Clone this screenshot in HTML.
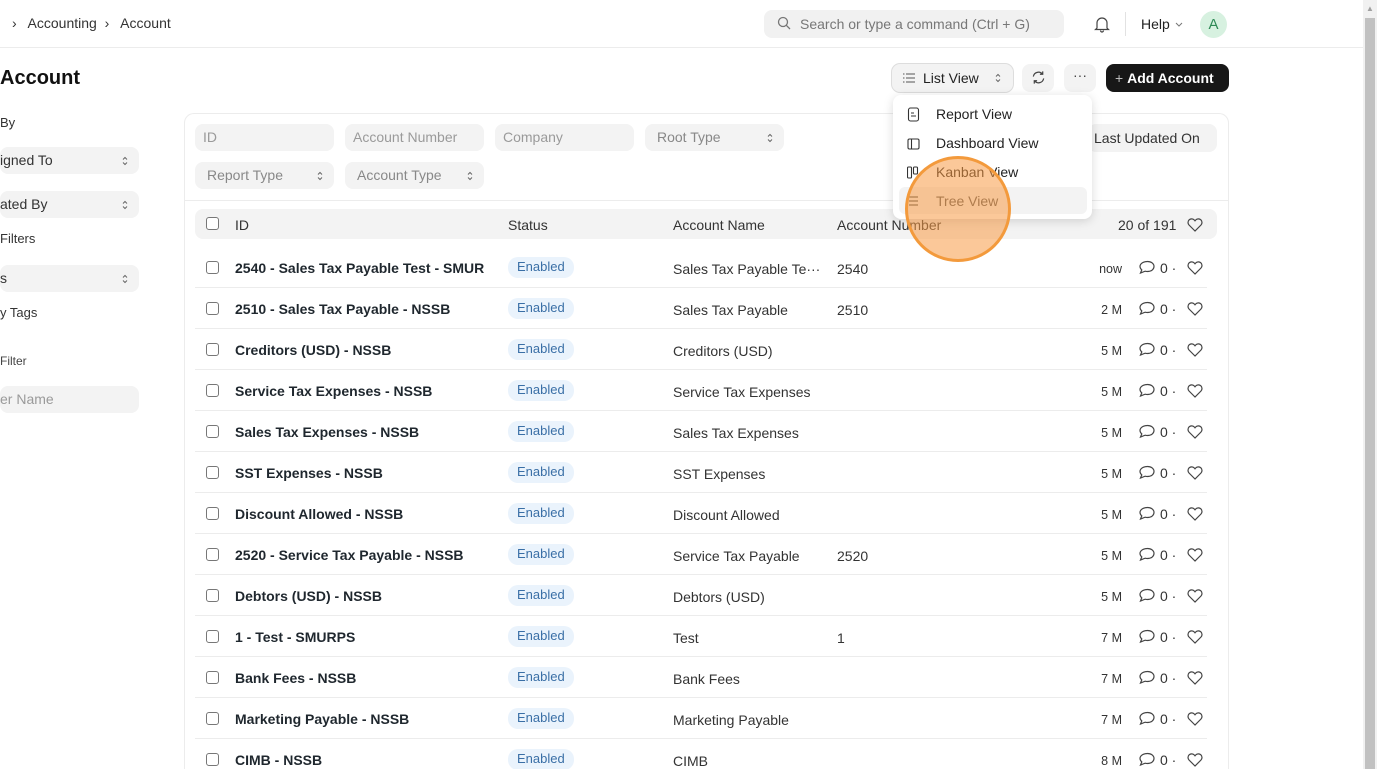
<!DOCTYPE html>
<html style="width:1377px;height:769px;overflow:hidden"><head><meta charset="utf-8">
<style>
*{box-sizing:border-box;margin:0;padding:0}
body{width:1377px;height:769px;overflow:hidden;background:#fff;font-family:"Liberation Sans",sans-serif;color:#1f272e;position:relative;font-size:14px}
.a{position:absolute;white-space:nowrap}
.inp{position:absolute;background:#f3f3f3;border-radius:8px;height:27px;color:#9a9a9a;font-size:14px;line-height:27px;padding-left:8px}
.sel{position:absolute;background:#f3f3f3;border-radius:8px;height:27px;color:#333;font-size:14px;line-height:27px;padding-left:0}
.chev{position:absolute;right:11px;top:9px;width:6px;height:10px}
.cb{position:absolute;width:13px;height:13px;border:1px solid #777;border-radius:3px;background:#fff}
.row{position:absolute;left:195px;width:1012px;height:41px;border-bottom:1px solid #ececec}
.row .cb{left:11px;top:14px}
.row .id{position:absolute;left:40px;top:13px;font-weight:bold;font-size:14px;color:#1f272e}
.row .st{position:absolute;left:313px;top:10px;background:#eaf3fc;color:#3a6fa6;font-size:13px;border-radius:10px;padding:2px 9px;height:21px}
.row .nm{position:absolute;left:478px;top:14px;color:#333}
.row .num{position:absolute;left:642px;top:14px;color:#333}
.row .tm{position:absolute;right:85px;top:15px;font-size:12.5px;color:#333}
.row .cm{position:absolute;left:965px;top:13px;color:#333;font-size:14px}
svg{display:block}
.menu div{position:absolute;left:43px;font-size:14px;color:#222}
</style></head><body>
<svg width="0" height="0" style="position:absolute"><defs>
<symbol id="ch" viewBox="0 0 6 10"><path d="M1 3.5L3 1.5L5 3.5M1 6.5L3 8.5L5 6.5" fill="none" stroke="#666" stroke-width="1"/></symbol>
</defs></svg>
<div class="a" style="left:12px;top:15px;font-size:14px;color:#333">›&nbsp;&nbsp; Accounting &nbsp;›&nbsp;&nbsp; Account</div>
<div class="a" style="left:764px;top:10px;width:300px;height:28px;background:#f1f1f1;border-radius:8px"></div>
<svg class="a" style="left:777px;top:16px" width="14" height="14" viewBox="0 0 14 14"><circle cx="6" cy="6" r="4.5" fill="none" stroke="#777" stroke-width="1.3"/><path d="M9.3 9.3L13 13" stroke="#777" stroke-width="1.3"/></svg>
<div class="a" style="left:800px;top:16px;color:#777;font-size:14px">Search or type a command (Ctrl + G)</div>
<svg class="a" style="left:1094px;top:15px" width="16" height="18" viewBox="0 0 16 18"><path d="M3 13V8a5 5 0 0110 0v5l1.5 1.5h-13z M6.5 15.5a1.5 1.5 0 003 0" fill="none" stroke="#444" stroke-width="1.2"/></svg>
<div class="a" style="left:1125px;top:12px;width:1px;height:24px;background:#e2e2e2"></div>
<div class="a" style="left:1141px;top:16px;color:#222;font-size:14px">Help</div>
<svg class="a" style="left:1175px;top:22px" width="8" height="5" viewBox="0 0 8 5"><path d="M1 1l3 3 3-3" fill="none" stroke="#777"/></svg>
<div class="a" style="left:1200px;top:11px;width:27px;height:27px;border-radius:50%;background:#d7f1e0;color:#2e8a55;text-align:center;line-height:27px;font-size:15px">A</div>
<div class="a" style="left:0;top:47px;width:1363px;height:1px;background:#ececec"></div>
<div class="a" style="left:1363px;top:0;width:14px;height:769px;background:#f1f1f1"></div>
<div class="a" style="left:1365px;top:18px;width:10px;height:751px;background:#c1c1c1"></div>
<div class="a" style="left:1366px;top:4px;font-size:8px;color:#a0a0a0">▲</div>
<div class="a" style="left:0;top:67px;font-size:20px;font-weight:bold;color:#111">Account</div>
<div class="a" style="left:892px;top:64px;width:121px;height:28px;background:#f3f3f3;border-radius:8px;box-shadow:0 0 0 1px #ddd"></div>
<svg class="a" style="left:903px;top:73px" width="12" height="10" viewBox="0 0 12 10"><path d="M0 1h1.5M3 1h9M0 5h1.5M3 5h9M0 9h1.5M3 9h9" stroke="#555" stroke-width="1"/></svg>
<div class="a" style="left:923px;top:70px;font-size:14px;color:#222">List View</div>
<svg class="a" style="left:995px;top:73px;width:6px;height:10px"><use href="#ch"/></svg>
<div class="a" style="left:1022px;top:64px;width:32px;height:28px;background:#f3f3f3;border-radius:8px"></div>
<svg class="a" style="left:1031px;top:70px" width="15" height="15" viewBox="0 0 16 16"><path d="M2.5 7a5.5 5.5 0 019.8-2.5M13.5 9a5.5 5.5 0 01-9.8 2.5M12.5 1.5v3h-3M3.5 14.5v-3h3" fill="none" stroke="#444" stroke-width="1.3"/></svg>
<div class="a" style="left:1064px;top:64px;width:32px;height:28px;background:#f3f3f3;border-radius:8px;text-align:center;line-height:22px;color:#444">···</div>
<div class="a" style="left:1106px;top:64px;width:123px;height:28px;background:#171717;border-radius:8px;color:#fff;font-size:14px;line-height:28px;padding-left:9px"><span style="color:#bbb">+</span> <b style="font-weight:bold">Add Account</b></div>
<div class="a" style="left:0;top:115px;font-size:13px;color:#333">By</div>
<div class="sel" style="left:0;top:147px;width:139px">igned To<svg class="chev"><use href="#ch"/></svg></div>
<div class="sel" style="left:0;top:191px;width:139px">ated By<svg class="chev"><use href="#ch"/></svg></div>
<div class="a" style="left:0;top:231px;font-size:13px;color:#333">Filters</div>
<div class="sel" style="left:0;top:265px;width:139px">s<svg class="chev"><use href="#ch"/></svg></div>
<div class="a" style="left:0;top:305px;font-size:13px;color:#333">y Tags</div>
<div class="a" style="left:0;top:354px;font-size:12px;color:#444">Filter</div>
<div class="inp" style="left:0;top:386px;width:139px;padding-left:0">er Name</div>
<div class="a" style="left:184px;top:113px;width:1045px;height:656px;border:1px solid #ececec;border-bottom:none;border-radius:10px 10px 0 0"></div>
<div class="inp" style="left:195px;top:124px;width:139px">ID</div>
<div class="inp" style="left:345px;top:124px;width:139px">Account Number</div>
<div class="inp" style="left:495px;top:124px;width:139px">Company</div>
<div class="inp" style="left:645px;top:124px;width:139px;color:#888;padding-left:12px">Root Type<svg class="chev"><use href="#ch"/></svg></div>
<div class="inp" style="left:195px;top:162px;width:139px;color:#888;padding-left:12px">Report Type<svg class="chev"><use href="#ch"/></svg></div>
<div class="inp" style="left:345px;top:162px;width:139px;color:#888;padding-left:12px">Account Type<svg class="chev"><use href="#ch"/></svg></div>
<div class="a" style="left:1088px;top:124px;width:129px;height:28px;background:#f3f3f3;border-radius:8px;line-height:28px;padding-left:6px;color:#333">Last Updated On</div>
<div class="a" style="left:185px;top:200px;width:1043px;height:1px;background:#ececec"></div>
<div class="a" style="left:195px;top:209px;width:1022px;height:30px;background:#f3f3f3;border-radius:8px"></div>
<div class="cb" style="left:206px;top:217px"></div>
<div class="a" style="left:235px;top:217px;color:#333">ID</div>
<div class="a" style="left:508px;top:217px;color:#333">Status</div>
<div class="a" style="left:673px;top:217px;color:#333">Account Name</div>
<div class="a" style="left:837px;top:217px;color:#333">Account Number</div>
<div class="a" style="left:1118px;top:217px;color:#333">20 of 191</div>
<svg class="a" style="left:1187px;top:217px" width="16" height="15" viewBox="0 0 16 15"><path d="M8 14L2 8a3.6 3.6 0 015.3-5L8 3.8l.7-.8A3.6 3.6 0 0114 8z" fill="none" stroke="#444" stroke-width="1.2"/></svg>
<div class="row" style="top:247px"><div class="cb"></div><div class="id">2540 - Sales Tax Payable Test - SMUR</div><div class="st">Enabled</div><div class="nm">Sales Tax Payable Te···</div><div class="num">2540</div><div class="tm">now</div><div class="cm">0 ·</div></div>
<div class="row" style="top:288px"><div class="cb"></div><div class="id">2510 - Sales Tax Payable - NSSB</div><div class="st">Enabled</div><div class="nm">Sales Tax Payable</div><div class="num">2510</div><div class="tm">2 M</div><div class="cm">0 ·</div></div>
<div class="row" style="top:329px"><div class="cb"></div><div class="id">Creditors (USD) - NSSB</div><div class="st">Enabled</div><div class="nm">Creditors (USD)</div><div class="tm">5 M</div><div class="cm">0 ·</div></div>
<div class="row" style="top:370px"><div class="cb"></div><div class="id">Service Tax Expenses - NSSB</div><div class="st">Enabled</div><div class="nm">Service Tax Expenses</div><div class="tm">5 M</div><div class="cm">0 ·</div></div>
<div class="row" style="top:411px"><div class="cb"></div><div class="id">Sales Tax Expenses - NSSB</div><div class="st">Enabled</div><div class="nm">Sales Tax Expenses</div><div class="tm">5 M</div><div class="cm">0 ·</div></div>
<div class="row" style="top:452px"><div class="cb"></div><div class="id">SST Expenses - NSSB</div><div class="st">Enabled</div><div class="nm">SST Expenses</div><div class="tm">5 M</div><div class="cm">0 ·</div></div>
<div class="row" style="top:493px"><div class="cb"></div><div class="id">Discount Allowed - NSSB</div><div class="st">Enabled</div><div class="nm">Discount Allowed</div><div class="tm">5 M</div><div class="cm">0 ·</div></div>
<div class="row" style="top:534px"><div class="cb"></div><div class="id">2520 - Service Tax Payable - NSSB</div><div class="st">Enabled</div><div class="nm">Service Tax Payable</div><div class="num">2520</div><div class="tm">5 M</div><div class="cm">0 ·</div></div>
<div class="row" style="top:575px"><div class="cb"></div><div class="id">Debtors (USD) - NSSB</div><div class="st">Enabled</div><div class="nm">Debtors (USD)</div><div class="tm">5 M</div><div class="cm">0 ·</div></div>
<div class="row" style="top:616px"><div class="cb"></div><div class="id">1 - Test - SMURPS</div><div class="st">Enabled</div><div class="nm">Test</div><div class="num">1</div><div class="tm">7 M</div><div class="cm">0 ·</div></div>
<div class="row" style="top:657px"><div class="cb"></div><div class="id">Bank Fees - NSSB</div><div class="st">Enabled</div><div class="nm">Bank Fees</div><div class="tm">7 M</div><div class="cm">0 ·</div></div>
<div class="row" style="top:698px"><div class="cb"></div><div class="id">Marketing Payable - NSSB</div><div class="st">Enabled</div><div class="nm">Marketing Payable</div><div class="tm">7 M</div><div class="cm">0 ·</div></div>
<div class="row" style="top:739px;height:30px;border-bottom:none"><div class="cb"></div><div class="id">CIMB - NSSB</div><div class="st">Enabled</div><div class="nm">CIMB</div><div class="tm">8 M</div><div class="cm">0 ·</div></div>
<svg class="a" style="left:1138px;top:260px" width="66" height="509" viewBox="0 0 66 509">
<defs><path id="hh" d="M57 14L51 8a3.6 3.6 0 015.3-5l.7.8.7-.8A3.6 3.6 0 0163 8z"/>
<path id="bb" d="M9.5 1.5c3.9 0 6.5 2.2 6.5 5s-2.6 5-6.5 5c-.9 0-1.7-.1-2.4-.3L2.5 13l1.3-3.1C2.6 8.9 2 7.8 2 6.5 2 3.7 5.1 1.5 9.5 1.5z"/></defs>
<g fill="none" stroke="#444" stroke-width="1.2">
<use href="#hh"/><use href="#bb"/>
<g transform="translate(0,41)"><use href="#hh"/><use href="#bb"/></g>
<g transform="translate(0,82)"><use href="#hh"/><use href="#bb"/></g>
<g transform="translate(0,123)"><use href="#hh"/><use href="#bb"/></g>
<g transform="translate(0,164)"><use href="#hh"/><use href="#bb"/></g>
<g transform="translate(0,205)"><use href="#hh"/><use href="#bb"/></g>
<g transform="translate(0,246)"><use href="#hh"/><use href="#bb"/></g>
<g transform="translate(0,287)"><use href="#hh"/><use href="#bb"/></g>
<g transform="translate(0,328)"><use href="#hh"/><use href="#bb"/></g>
<g transform="translate(0,369)"><use href="#hh"/><use href="#bb"/></g>
<g transform="translate(0,410)"><use href="#hh"/><use href="#bb"/></g>
<g transform="translate(0,451)"><use href="#hh"/><use href="#bb"/></g>
<g transform="translate(0,492)"><use href="#hh"/><use href="#bb"/></g>
</g></svg>
<div class="a menu" style="left:893px;top:95px;width:199px;height:124px;background:#fff;border-radius:8px;box-shadow:0 2px 10px rgba(0,0,0,.15)">
<div style="left:6px;top:92px;width:188px;height:27px;background:#f3f3f3;border-radius:6px"></div>
<div style="top:11px">Report View</div>
<div style="top:40px">Dashboard View</div>
<div style="top:69px">Kanban View</div>
<div style="top:98px;color:#555">Tree View</div>
<svg style="position:absolute;left:14px;top:12px" width="14" height="110" viewBox="0 0 14 110"><g fill="none" stroke="#333" stroke-width="1.1"><rect x="1.5" y="1" width="10" height="13" rx="2"/><path d="M4 6h3M4 9h5"/><rect x="1" y="32" width="11" height="10" rx="1.5"/><path d="M4.5 32v10"/><rect x="0.5" y="60" width="4" height="11" rx="1"/><rect x="6.5" y="60" width="4" height="7" rx="1"/><path d="M2 90h9M2 94h9M2 98h9"/></g></svg>
</div>
<div class="a" style="left:905px;top:156px;width:106px;height:106px;border-radius:50%;background:rgba(248,155,70,0.55);border:3px solid #f39a3c"></div>
</body></html>
